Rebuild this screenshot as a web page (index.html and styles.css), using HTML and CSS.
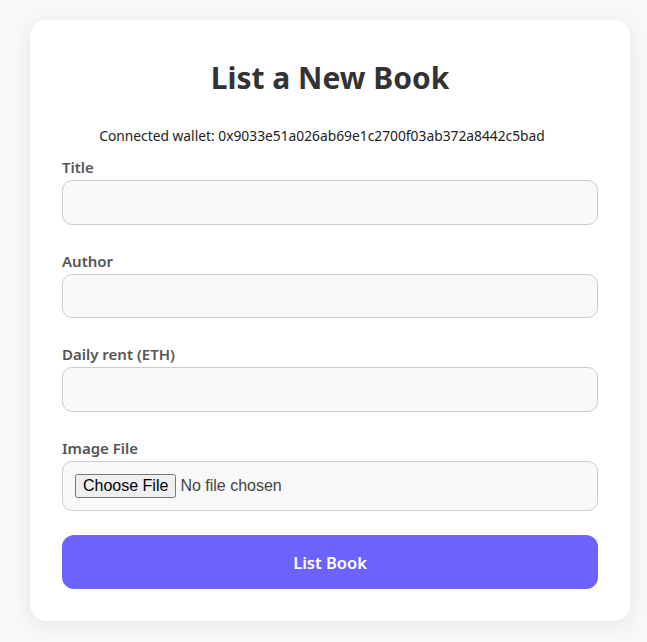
FILE: index.html
```html
<!DOCTYPE html>
<html lang="en">
<head>
<meta charset="utf-8">
<title>List a New Book</title>
<link rel="stylesheet" href="styles.css">
</head>
<body>
<div class="card">
  <h1 class="title">List a New Book</h1>
  <p class="wallet">Connected wallet: 0x9033e51a026ab69e1c2700f03ab372a8442c5bad</p>
  <form class="form">
    <div class="field">
      <label class="label" for="title">Title</label>
      <input class="input" id="title" type="text">
    </div>
    <div class="field">
      <label class="label" for="author">Author</label>
      <input class="input" id="author" type="text">
    </div>
    <div class="field">
      <label class="label" for="rent">Daily rent (ETH)</label>
      <input class="input" id="rent" type="text">
    </div>
    <div class="field">
      <label class="label" for="image">Image File</label>
      <input class="input file" id="image" type="file">
    </div>
    <button class="submit" type="button">List Book</button>
  </form>
</div>
</body>
</html>
```

FILE: styles.css
```css
html, body {
  margin: 0;
  padding: 0;
  background: #f7f8fa;
}
body {
  padding: 20px 30px;
  font-family: "Noto Sans", "Open Sans", sans-serif;
  color: #333;
}
.card {
  width: 600px;
  box-sizing: border-box;
  background: #fff;
  border-radius: 16px;
  padding: 39px 32px 32px;
  box-shadow: 0 4px 20px rgba(0, 0, 0, 0.08);
}
.title {
  margin: 0;
  text-align: center;
  font-size: 30px;
  line-height: 38px;
  font-weight: 700;
  color: #333;
}
.wallet {
  margin: 29px 0 12px;
  padding-right: 16px;
  text-align: center;
  font-size: 13.8px;
  line-height: 19px;
  color: #222;
}
.form {
  display: flex;
  flex-direction: column;
}
.field {
  display: flex;
  flex-direction: column;
  gap: 3px;
  margin-bottom: 26px;
}
.label {
  font-size: 15px;
  line-height: 20px;
  font-weight: 600;
  color: #555;
}
.input {
  box-sizing: border-box;
  height: 44.5px;
  width: 100%;
  border: 1px solid #ccc;
  border-radius: 10px;
  background: #f9f9f9;
  padding: 0 12px;
  font-size: 16px;
}
.file {
  height: auto;
  padding: 12px;
  font-family: "Liberation Sans", Arial, sans-serif;
  color: #444;
}
.submit {
  margin-top: -1.5px;
  height: 54px;
  border: none;
  border-radius: 12px;
  background: #6c63ff;
  color: #fff;
  font-family: "Noto Sans", sans-serif;
  font-size: 16.5px;
  font-weight: 600;
}
```
